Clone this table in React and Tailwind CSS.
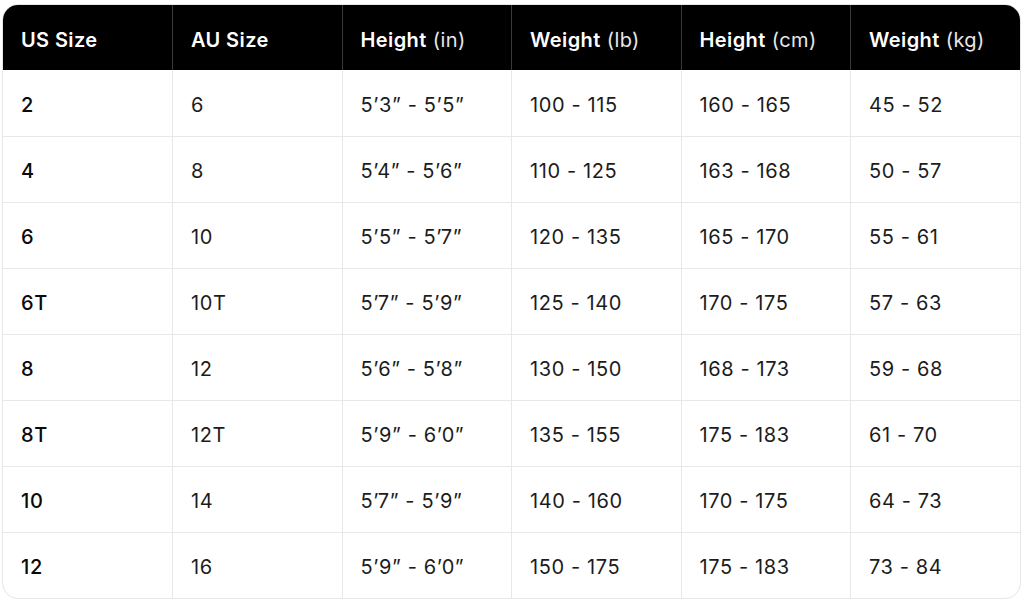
const headers = [
  ["US Size", ""],
  ["AU Size", ""],
  ["Height", "(in)"],
  ["Weight", "(lb)"],
  ["Height", "(cm)"],
  ["Weight", "(kg)"],
];

const rows = [
  ["2", "6", "5\u20193\u201d - 5\u20195\u201d", "100 - 115", "160 - 165", "45 - 52"],
  ["4", "8", "5\u20194\u201d - 5\u20196\u201d", "110 - 125", "163 - 168", "50 - 57"],
  ["6", "10", "5\u20195\u201d - 5\u20197\u201d", "120 - 135", "165 - 170", "55 - 61"],
  ["6T", "10T", "5\u20197\u201d - 5\u20199\u201d", "125 - 140", "170 - 175", "57 - 63"],
  ["8", "12", "5\u20196\u201d - 5\u20198\u201d", "130 - 150", "168 - 173", "59 - 68"],
  ["8T", "12T", "5\u20199\u201d - 6\u20190\u201d", "135 - 155", "175 - 183", "61 - 70"],
  ["10", "14", "5\u20197\u201d - 5\u20199\u201d", "140 - 160", "170 - 175", "64 - 73"],
  ["12", "16", "5\u20199\u201d - 6\u20190\u201d", "150 - 175", "175 - 183", "73 - 84"],
];

export default function App() {
  return (
    <div className="bg-white w-[1024px] h-[602px] pt-[4px] pl-[2px]" style={{ fontFamily: "Inter, 'Liberation Sans', sans-serif" }}>
      <div className="w-[1019px] rounded-[16px] border-[1.5px] border-[#e6e6e6] overflow-hidden">
        <table className="w-full table-fixed border-collapse">
          <thead>
            <tr className="bg-black text-white h-[65px]">
              {headers.map(([main, unit], i) => (
                <th
                  key={i}
                  className={`text-left font-semibold text-[20px] tracking-[0.02em] pl-[18px] pt-[4px] ${i < 5 ? "border-r-[1.5px] border-[#3a3a3a]" : ""}`}
                >
                  {main}
                  {unit && <span className="font-normal text-[#e8e8e8]"> {unit}</span>}
                </th>
              ))}
            </tr>
          </thead>
          <tbody>
            {rows.map((r, ri) => (
              <tr key={ri} className="h-[66px]">
                {r.map((c, ci) => (
                  <td
                    key={ci}
                    className={`text-[20px] tracking-[0.03em] pl-[18px] pt-[4px] border-[#e8e8e8] ${ci < 5 ? "border-r-[1.5px]" : ""} ${ri < rows.length - 1 ? "border-b-[1.5px]" : ""} ${ci === 0 ? "text-[#0a0a0a] font-medium" : "text-[#1c1c1c]"}`}
                  >
                    {c}
                  </td>
                ))}
              </tr>
            ))}
          </tbody>
        </table>
      </div>
    </div>
  );
}
